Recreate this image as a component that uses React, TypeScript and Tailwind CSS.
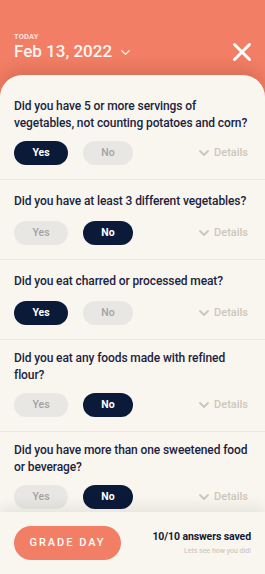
import { ChevronDown } from "lucide-react";

const questions = [
  { lines: ["Did you have 5 or more servings of", "vegetables, not counting potatoes and corn?"], answer: "yes" },
  { lines: ["Did you have at least 3 different vegetables?"], answer: "no" },
  { lines: ["Did you eat charred or processed meat?"], answer: "yes" },
  { lines: ["Did you eat any foods made with refined", "flour?"], answer: "no" },
  { lines: ["Did you have more than one sweetened food", "or beverage?"], answer: "no" },
];

function Choice({ label, active }: { label: string; active: boolean }) {
  return (
    <div
      className={
        active
          ? "h-[24px] rounded-full bg-[#0c1a3a] text-white flex items-center justify-center text-[10.5px] font-bold"
          : "h-[24px] rounded-full bg-[#e9e7e4] text-[#a3a2a0] flex items-center justify-center text-[10.5px] font-medium"
      }
    >
      {label}
    </div>
  );
}

function Question({ lines, answer, first }: { lines: string[]; answer: string; first?: boolean }) {
  const twoLines = lines.length > 1;
  const pad = first ? "pt-[23px]" : twoLines ? "pt-[10px]" : "pt-[13px]";
  return (
    <div className={`px-[14px] pb-[14px] border-b border-[#ede7dd] ${pad}`}>
      <p className="text-[12px] leading-[17px] font-medium text-[#1c2340] tracking-[-0.1px] whitespace-nowrap">
        {lines.map((l, i) => (
          <span key={i} className="block">
            {l}
          </span>
        ))}
      </p>
      <div className={`${twoLines ? "mt-[9px]" : "mt-[11px]"} flex items-center`}>
        <div className="w-[54px]">
          <Choice label="Yes" active={answer === "yes"} />
        </div>
        <div className="w-[50px] ml-[15px]">
          <Choice label="No" active={answer === "no"} />
        </div>
        <div className="ml-auto flex items-center gap-[2px] text-[#cdc6bb] pr-[3px]">
          <ChevronDown size={16} strokeWidth={2.8} />
          <span className="text-[11px] font-medium">Details</span>
        </div>
      </div>
    </div>
  );
}

export default function App() {
  return (
    <div
      className="w-full h-[574px] bg-[#f17e65] flex flex-col overflow-hidden"
      style={{ fontFamily: "Roboto, 'Noto Sans', sans-serif" }}
    >
      <div className="px-[14px] pt-[32px]">
        <div className="text-[7.5px] leading-[10px] font-bold tracking-wide text-[#fde3da]">TODAY</div>
        <div className="flex items-center h-[20px]">
          <span className="text-[17px] font-medium text-[#fff6f1]">Feb 13, 2022</span>
          <ChevronDown size={15} strokeWidth={2.2} className="ml-[6px] text-[#fff6f1]" />
          <svg className="ml-auto mr-[-1px]" width="20" height="20" viewBox="0 0 20 20">
            <path d="M2.5 2.5 L17.5 17.5 M17.5 2.5 L2.5 17.5" stroke="white" strokeWidth="3" strokeLinecap="round" />
          </svg>
        </div>
      </div>
      <div className="mt-[13px] flex-1 min-h-0 flex flex-col rounded-t-[22px] bg-[#f9f6ef] shadow-[0_-6px_14px_rgba(120,40,20,0.18)] overflow-hidden">
        <div className="flex-1 min-h-0 overflow-hidden">
          {questions.map((q, i) => (
            <Question key={i} lines={q.lines} answer={q.answer} first={i === 0} />
          ))}
        </div>
        <div className="h-[62px] shrink-0 bg-[#f9f6ef] shadow-[0_-6px_12px_rgba(0,0,0,0.07)] px-[14px] flex items-center justify-between">
          <div className="w-[107px] h-[34px] rounded-full bg-[#f17e65] text-white flex items-center justify-center text-[11px] font-medium tracking-[0.18em]">
            GRADE DAY
          </div>
          <div className="text-right">
            <div className="text-[10.5px] font-bold text-[#111a33] leading-[14px] tracking-[-0.1px]">10/10 answers saved</div>
            <div className="text-[7px] text-[#c6c1b9] leading-[10px] mt-[2px]">Lets see how you did!</div>
          </div>
        </div>
      </div>
    </div>
  );
}
